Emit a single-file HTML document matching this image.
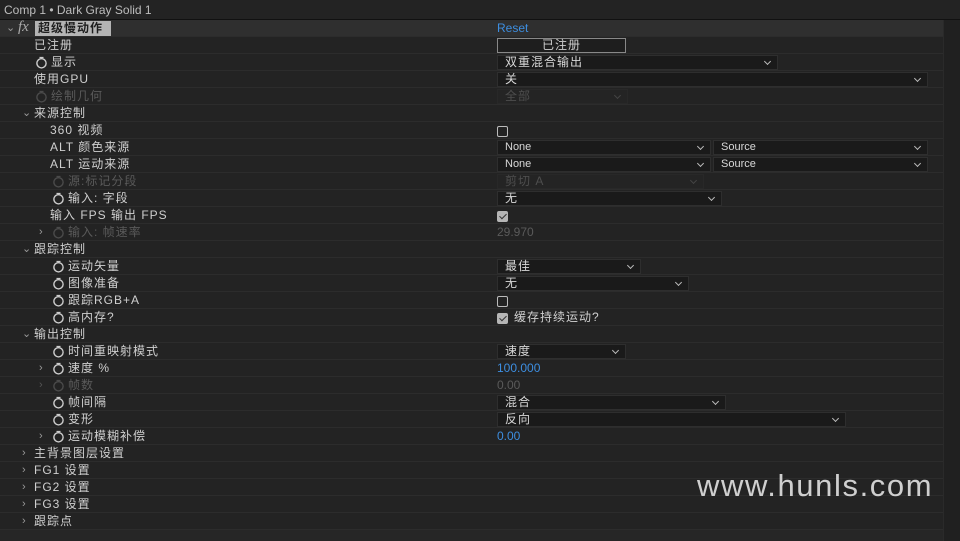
<!DOCTYPE html>
<html><head><meta charset="utf-8"><style>
*{margin:0;padding:0;box-sizing:border-box}
body{width:960px;height:541px;overflow:hidden;background:#232323;font-family:"Liberation Sans","Noto Sans CJK SC",sans-serif;font-size:12px;color:#cfcfcf;position:relative}
.title{position:absolute;left:0;top:0;width:960px;height:19px;background:#232323;color:#bdbdbd;font-size:12px;line-height:21px;padding-left:4px}
.line{position:absolute;left:0;top:19px;width:960px;height:1px;background:#111}
.r{position:absolute;left:0;width:943px;height:17px;border-bottom:1px solid #2c2c2c;background:#232323}
.strip{position:absolute;left:943px;top:20px;width:17px;height:521px;background:#202020;border-left:1px solid #2a2a2a}
.t{position:absolute;top:0;line-height:16px;white-space:nowrap;letter-spacing:1px}
.d{color:#5a5a5a}
.sw{position:absolute;top:2px;width:13px;height:13px}
.ch{position:absolute;top:0;line-height:16px;color:#9a9a9a;font-size:11px}
.dd{position:absolute;top:1px;height:15px;background:#1a1a1a;border:1px solid #2e2e2e;line-height:13px;padding-left:7px;color:#d8d8d8;letter-spacing:1px}
.dd:after{content:"";position:absolute;right:7px;top:3px;width:4px;height:4px;border-right:1.2px solid #bbb;border-bottom:1.2px solid #bbb;transform:rotate(45deg)}
.dd.dis{color:#4e4e4e;background:#242424;border-color:#282828}
.dd.dis:after{border-color:#444}
.dd.sm{font-size:11px;letter-spacing:0}
.cb{position:absolute;top:4px;left:497px;width:11px;height:11px;border:1.5px solid #bbb;border-radius:2px}
.cb.on{background:#b5b5b5;border-color:#b5b5b5}
.cb.on:after{content:"";position:absolute;left:3px;top:0px;width:3px;height:6px;border-right:1.5px solid #333;border-bottom:1.5px solid #333;transform:rotate(45deg)}
.blue{color:#3d8ee0;letter-spacing:0}
</style></head><body>
<div class="title">Comp 1 • Dark Gray Solid 1</div>
<div class="line"></div>
<div class="strip"></div>
<svg width="0" height="0" style="position:absolute"><defs><symbol id="s" viewBox="0 0 13 13"><circle cx="6.5" cy="7.3" r="4.6" fill="none" stroke="currentColor" stroke-width="1.4"/><path d="M4.5 1.5h4M6.5 1.5v1.3" stroke="currentColor" stroke-width="1.3"/></symbol></defs></svg>

<div class="r" style="top:20px;background:#2f2f2f"><span class="ch" style="left:6px">⌄</span><span class="t" style="left:18px;font-style:italic;font-family:'Liberation Serif',serif;font-size:15px;color:#aaa;top:-1px;letter-spacing:0">fx</span><span class="t" style="left:35px;top:1px;height:15px;width:76px;background:#b4b4b4;color:#1e1e1e;font-weight:bold;padding-left:3px;line-height:15px">超级慢动作</span><span class="t blue" style="left:497px">Reset</span></div>
<div class="r" style="top:37px"><span class="t" style="left:34px">已注册</span><span class="t" style="left:497px;top:1px;width:129px;height:15px;border:1px solid #888;text-align:center;line-height:13px;background:#1e1e1e">已注册</span></div>
<div class="r" style="top:54px"><svg class="sw" style="left:35px;color:#ccc"><use href="#s"/></svg><span class="t" style="left:51px">显示</span><div class="dd" style="left:497px;width:281px">双重混合输出</div></div>
<div class="r" style="top:71px"><span class="t" style="left:34px">使用GPU</span><div class="dd" style="left:497px;width:431px">关</div></div>
<div class="r" style="top:88px"><svg class="sw" style="left:35px;color:#4a4a4a"><use href="#s"/></svg><span class="t d" style="left:51px">绘制几何</span><div class="dd dis" style="left:497px;width:131px">全部</div></div>
<div class="r" style="top:105px"><span class="ch" style="left:22px">⌄</span><span class="t" style="left:34px">来源控制</span></div>
<div class="r" style="top:122px"><span class="t" style="left:50px">360 视频</span><div class="cb"></div></div>
<div class="r" style="top:139px"><span class="t" style="left:50px">ALT 颜色来源</span><div class="dd sm" style="left:497px;width:214px">None</div><div class="dd sm" style="left:713px;width:215px">Source</div></div>
<div class="r" style="top:156px"><span class="t" style="left:50px">ALT 运动来源</span><div class="dd sm" style="left:497px;width:214px">None</div><div class="dd sm" style="left:713px;width:215px">Source</div></div>
<div class="r" style="top:173px"><svg class="sw" style="left:52px;color:#4a4a4a"><use href="#s"/></svg><span class="t d" style="left:68px">源:标记分段</span><div class="dd dis" style="left:497px;width:207px">剪切 A</div></div>
<div class="r" style="top:190px"><svg class="sw" style="left:52px;color:#ccc"><use href="#s"/></svg><span class="t" style="left:68px">输入: 字段</span><div class="dd" style="left:497px;width:225px">无</div></div>
<div class="r" style="top:207px"><span class="t" style="left:50px">输入 FPS 输出 FPS</span><div class="cb on"></div></div>
<div class="r" style="top:224px"><span class="ch" style="left:39px">›</span><svg class="sw" style="left:52px;color:#4a4a4a"><use href="#s"/></svg><span class="t d" style="left:68px">输入: 帧速率</span><span class="t d" style="left:497px;letter-spacing:0">29.970</span></div>
<div class="r" style="top:241px"><span class="ch" style="left:22px">⌄</span><span class="t" style="left:34px">跟踪控制</span></div>
<div class="r" style="top:258px"><svg class="sw" style="left:52px;color:#ccc"><use href="#s"/></svg><span class="t" style="left:68px">运动矢量</span><div class="dd" style="left:497px;width:144px">最佳</div></div>
<div class="r" style="top:275px"><svg class="sw" style="left:52px;color:#ccc"><use href="#s"/></svg><span class="t" style="left:68px">图像准备</span><div class="dd" style="left:497px;width:192px">无</div></div>
<div class="r" style="top:292px"><svg class="sw" style="left:52px;color:#ccc"><use href="#s"/></svg><span class="t" style="left:68px">跟踪RGB+A</span><div class="cb"></div></div>
<div class="r" style="top:309px"><svg class="sw" style="left:52px;color:#ccc"><use href="#s"/></svg><span class="t" style="left:68px">高内存?</span><div class="cb on"></div><span class="t" style="left:514px">缓存持续运动?</span></div>
<div class="r" style="top:326px"><span class="ch" style="left:22px">⌄</span><span class="t" style="left:34px">输出控制</span></div>
<div class="r" style="top:343px"><svg class="sw" style="left:52px;color:#ccc"><use href="#s"/></svg><span class="t" style="left:68px">时间重映射模式</span><div class="dd" style="left:497px;width:129px">速度</div></div>
<div class="r" style="top:360px"><span class="ch" style="left:39px">›</span><svg class="sw" style="left:52px;color:#ccc"><use href="#s"/></svg><span class="t" style="left:68px">速度 %</span><span class="t blue" style="left:497px">100.000</span></div>
<div class="r" style="top:377px"><span class="ch" style="left:39px;color:#555">›</span><svg class="sw" style="left:52px;color:#4a4a4a"><use href="#s"/></svg><span class="t d" style="left:68px">帧数</span><span class="t d" style="left:497px;letter-spacing:0">0.00</span></div>
<div class="r" style="top:394px"><svg class="sw" style="left:52px;color:#ccc"><use href="#s"/></svg><span class="t" style="left:68px">帧间隔</span><div class="dd" style="left:497px;width:229px">混合</div></div>
<div class="r" style="top:411px"><svg class="sw" style="left:52px;color:#ccc"><use href="#s"/></svg><span class="t" style="left:68px">变形</span><div class="dd" style="left:497px;width:349px">反向</div></div>
<div class="r" style="top:428px"><span class="ch" style="left:39px">›</span><svg class="sw" style="left:52px;color:#ccc"><use href="#s"/></svg><span class="t" style="left:68px">运动模糊补偿</span><span class="t blue" style="left:497px">0.00</span></div>
<div class="r" style="top:445px"><span class="ch" style="left:22px">›</span><span class="t" style="left:34px">主背景图层设置</span></div>
<div class="r" style="top:462px"><span class="ch" style="left:22px">›</span><span class="t" style="left:34px">FG1 设置</span></div>
<div class="r" style="top:479px"><span class="ch" style="left:22px">›</span><span class="t" style="left:34px">FG2 设置</span></div>
<div class="r" style="top:496px"><span class="ch" style="left:22px">›</span><span class="t" style="left:34px">FG3 设置</span></div>
<div class="r" style="top:513px"><span class="ch" style="left:22px">›</span><span class="t" style="left:34px">跟踪点</span></div>
<div style="position:absolute;left:0;top:530px;width:943px;height:11px;background:#262626"></div>
<div style="position:absolute;left:697px;top:468px;font-size:31px;color:#cfcfcf;font-family:'Liberation Sans',sans-serif;letter-spacing:1.6px">www.hunls.com</div>
</body></html>
